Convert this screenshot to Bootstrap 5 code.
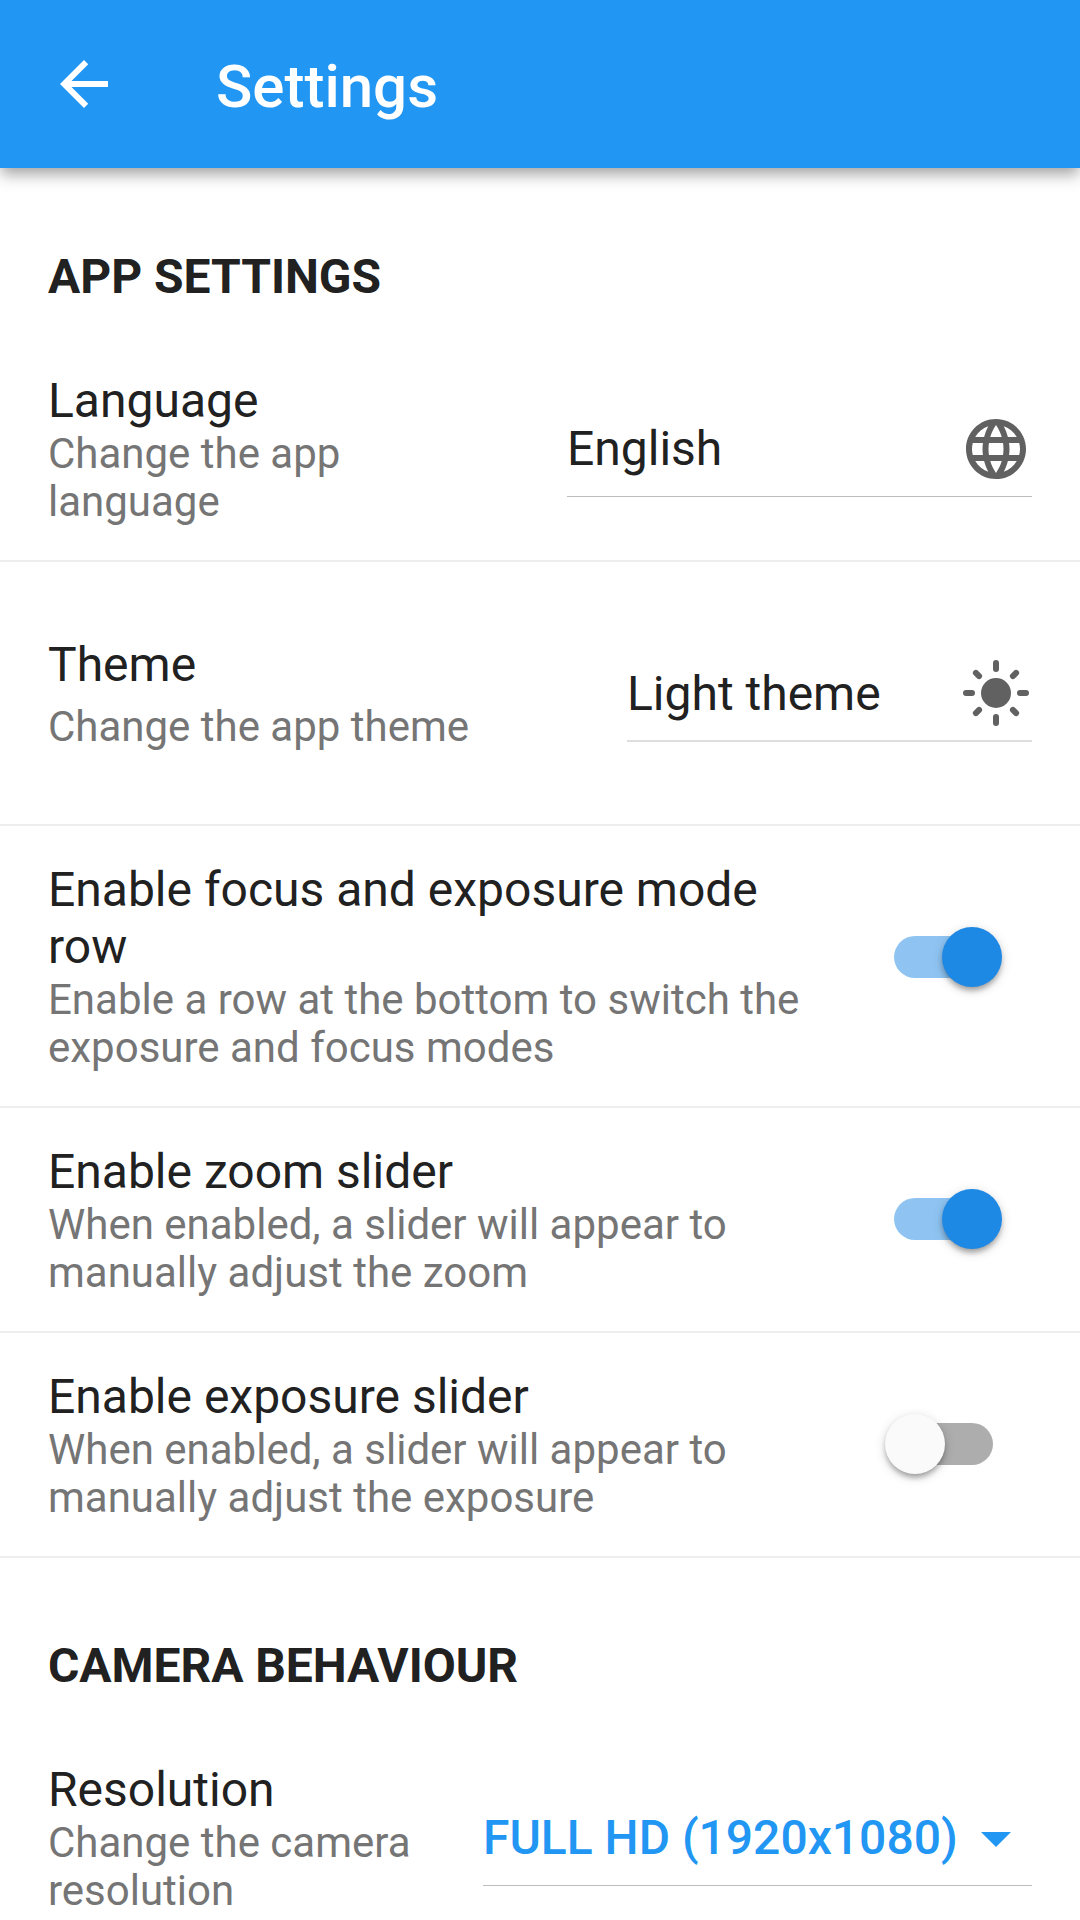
<!DOCTYPE html>
<html lang="en">
<head>
<meta charset="utf-8">
<meta name="viewport" content="width=device-width, initial-scale=1">
<title>Settings</title>
<link href="https://cdn.jsdelivr.net/npm/bootstrap@5.3.0/dist/css/bootstrap.min.css" rel="stylesheet">
<style>
  body { font-family: Roboto, "Liberation Sans", sans-serif; color: #212121; background: #fff; height: 1920px; overflow: hidden; font-size: 48px; }
  .app-bar { height: 168px; padding: 0 48px; background: #2196f3; box-shadow: 0 6px 12px -3px rgba(0,0,0,.2), 0 8px 15px 0 rgba(0,0,0,.22); position: relative; z-index: 1; }
  .app-title { font-size: 60px; font-weight: 500; line-height: 70px; margin: 6px 0 0 96px; }
  .section-title { font-size: 48px; font-weight: 700; line-height: 57px; padding: 80px 48px 32px; margin: 0; }
  .section-title.second { padding-top: 79px; letter-spacing: -.05px; }
  .setting { padding: 35px 48px; gap: 48px; border-bottom: 2px solid #eee; }
  .setting.roomy { height: 264px; padding-top: 0; padding-bottom: 0; }
  .name { font-size: 48px; line-height: 57px; }
  .hint { font-size: 42px; line-height: 48px; color: #757575; margin-top: 1px; margin-bottom: -1px; }
  .roomy .hint { margin-top: 10px; margin-bottom: 0; }
  .icon { width: 72px; height: 72px; flex: none; display: block; fill: currentColor; }
  .picker { height: 96px; line-height: 57px; box-shadow: inset 0 -1px #bdbdbd; white-space: nowrap; }
  .picker .icon { color: #616161; }
  .w-lang { width: 465px; }
  .w-theme { width: 405px; height: 98px; box-shadow: inset 0 -2px #dedede; }
  .w-res { width: 549px; font-weight: 500; color: #2196f3; }
  .w-res .icon { color: #2196f3; }
  .toggle { width: 180px; padding-left: 42px; }
  .track { width: 99px; height: 42px; border-radius: 21px; background: #adadad; position: relative; }
  .knob { position: absolute; width: 60px; height: 60px; top: -9px; left: -9px; border-radius: 50%; background: #fafafa; box-shadow: 0 6px 6px -3px rgba(0,0,0,.2), 0 3px 5px rgba(0,0,0,.14), 0 3px 12px rgba(0,0,0,.16); }
  .on .track { background: #8fc4f2; }
  .on .knob { left: 48px; background: #1e88e5; }
  .raised { margin-bottom: 18px; }
  .level { margin-bottom: 1px; }
</style>
</head>
<body>
<header class="app-bar d-flex align-items-center text-white">
  <svg class="icon" viewBox="0 0 24 24"><path d="M20 11H7.83l5.59-5.59L12 4l-8 8 8 8 1.41-1.41L7.83 13H20v-2z"/></svg>
  <h1 class="app-title">Settings</h1>
</header>
<main>
  <h2 class="section-title">APP SETTINGS</h2>
  <div class="setting d-flex align-items-center">
    <div class="flex-fill"><div class="name">Language</div><div class="hint">Change the app language</div></div>
    <div class="picker w-lang d-flex flex-shrink-0 align-items-center justify-content-between">
      <span>English</span>
      <svg class="icon" viewBox="0 0 24 24"><path d="M11.99 2C6.47 2 2 6.48 2 12s4.47 10 9.99 10C17.52 22 22 17.52 22 12S17.52 2 11.99 2zm6.93 6h-2.95c-.32-1.25-.78-2.45-1.38-3.56 1.84.63 3.37 1.91 4.33 3.56zM12 4.04c.83 1.2 1.48 2.53 1.91 3.96h-3.82c.43-1.43 1.08-2.76 1.91-3.96zM4.26 14C4.1 13.36 4 12.69 4 12s.1-1.36.26-2h3.38c-.08.66-.14 1.32-.14 2s.06 1.34.14 2H4.26zm.82 2h2.95c.32 1.25.78 2.45 1.38 3.56-1.84-.63-3.37-1.9-4.33-3.56zm2.95-8H5.08c.96-1.66 2.49-2.93 4.33-3.56C8.81 5.55 8.35 6.75 8.03 8zM12 19.96c-.83-1.2-1.48-2.53-1.91-3.96h3.82c-.43 1.43-1.08 2.76-1.91 3.96zM14.34 14H9.66c-.09-.66-.16-1.32-.16-2s.07-1.35.16-2h4.68c.09.65.16 1.32.16 2s-.07 1.34-.16 2zm.25 5.56c.6-1.11 1.06-2.31 1.38-3.56h2.95c-.96 1.65-2.49 2.93-4.33 3.56zM16.36 14c.08-.66.14-1.32.14-2s-.06-1.34-.14-2h3.38c.16.64.26 1.31.26 2s-.1 1.36-.26 2h-3.38z"/></svg>
    </div>
  </div>
  <div class="setting roomy d-flex align-items-center">
    <div class="flex-fill"><div class="name">Theme</div><div class="hint">Change the app theme</div></div>
    <div class="picker w-theme d-flex flex-shrink-0 align-items-center justify-content-between">
      <span>Light theme</span>
      <svg class="icon" viewBox="0 0 24 24"><circle cx="12" cy="12" r="5"/><path fill="none" stroke="currentColor" stroke-width="2" stroke-linecap="round" d="M12 2v2M12 20v2M2 12h2M20 12h2M5.3 5.3l1.06 1.06M17.64 17.64l1.06 1.06M18.7 5.3l-1.06 1.06M6.36 17.64l-1.06 1.06"/></svg>
    </div>
  </div>
  <div class="setting d-flex align-items-center">
    <div class="flex-fill"><div class="name">Enable focus and exposure mode row</div><div class="hint">Enable a row at the bottom to switch the exposure and focus modes</div></div>
    <div class="toggle on raised flex-shrink-0"><div class="track"><div class="knob"></div></div></div>
  </div>
  <div class="setting d-flex align-items-center">
    <div class="flex-fill"><div class="name">Enable zoom slider</div><div class="hint">When enabled, a slider will appear to manually adjust the zoom</div></div>
    <div class="toggle on level flex-shrink-0"><div class="track"><div class="knob"></div></div></div>
  </div>
  <div class="setting d-flex align-items-center">
    <div class="flex-fill"><div class="name">Enable exposure slider</div><div class="hint">When enabled, a slider will appear to manually adjust the exposure</div></div>
    <div class="toggle level flex-shrink-0"><div class="track"><div class="knob"></div></div></div>
  </div>
  <h2 class="section-title second">CAMERA BEHAVIOUR</h2>
  <div class="setting d-flex align-items-center">
    <div class="flex-fill"><div class="name">Resolution</div><div class="hint">Change the camera resolution</div></div>
    <div class="picker w-res d-flex flex-shrink-0 align-items-center justify-content-between">
      <span>FULL HD (1920x1080)</span>
      <svg class="icon" viewBox="0 0 24 24"><path d="M7 10l5 5 5-5z"/></svg>
    </div>
  </div>
</main>
<script src="https://cdn.jsdelivr.net/npm/bootstrap@5.3.0/dist/js/bootstrap.bundle.min.js"></script>
</body>
</html>
